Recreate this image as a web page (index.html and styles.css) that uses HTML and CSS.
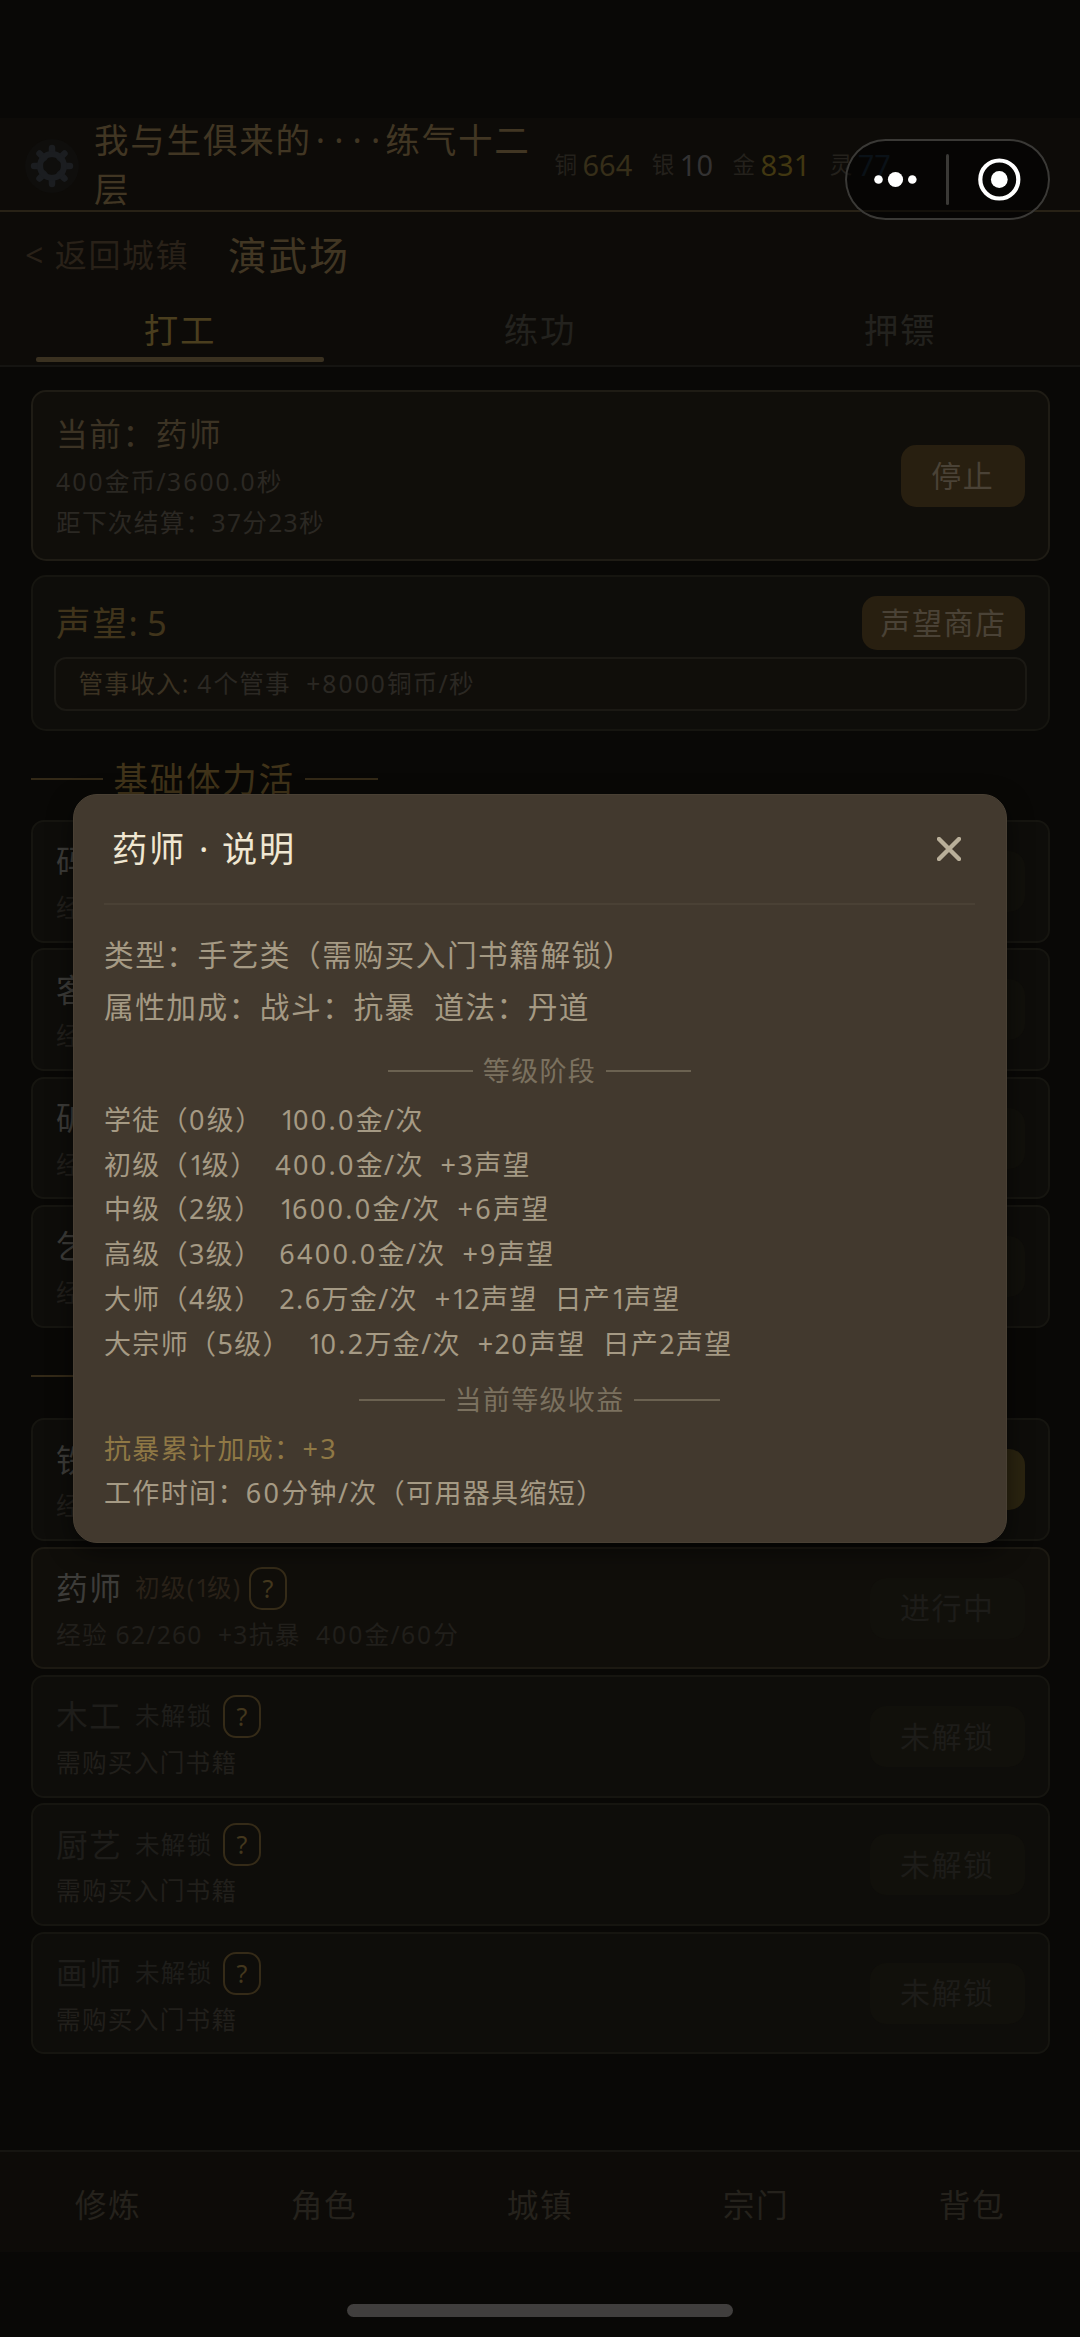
FILE: index.html
```html
<!DOCTYPE html>
<html lang="zh-CN">
<head>
<meta charset="utf-8">
<title>演武场</title>
<link rel="stylesheet" href="styles.css">
</head>
<body>
<div class="page">
  <header class="topbar">
    <svg class="gear" viewBox="-30 -30 60 60">
      <circle class="gear-glow" r="27"/>
      <g class="gear-teeth">
        <path d="M0-18V-12M0 12V18M-18 0H-12M12 0H18M-12.500-12.500L-8-8M8 8L12.500 12.500M12.500-12.500L8-8M-8 8L-12.500 12.500"/>
      </g>
      <circle class="gear-ring" r="12"/>
    </svg>
    <div class="player">我与生俱来的<span class="dots">····</span>练气十二层</div>
    <div class="coins">
      <span class="coin copper"><i>铜</i><b>664</b></span>
      <span class="coin silver"><i>银</i><b>10</b></span>
      <span class="coin gold"><i>金</i><b>831</b></span>
      <span class="coin spirit"><i>灵</i><b>77</b></span>
    </div>
  </header>

  <div class="subhead">
    <div class="crumbs"><span class="back">&lt; 返回城镇</span><span class="place">演武场</span></div>
    <nav class="tabs">
      <span class="tab active">打工</span><span class="tab">练功</span><span class="tab">押镖</span>
    </nav>
  </div>

  <main class="content">
    <section class="card current">
      <div class="current-info">
        <div class="current-name">当前：药师</div>
        <div class="current-line"><span class="n">400</span>金币/<span class="n">3600.0</span>秒</div>
        <div class="current-line">距下次结算：37分23秒</div>
      </div>
      <span class="btn stop">停止</span>
    </section>

    <section class="card fame">
      <div class="fame-row"><span class="fame-value">声望: 5</span><span class="btn shop">声望商店</span></div>
      <div class="income"><span class="income-label">管事收入: </span><span class="n">4</span>个管事  <span class="n">+8000</span>铜币/秒</div>
    </section>

    <h2 class="group">基础体力活</h2>
    <div class="jobs">
      <article class="card job"><div><div class="job-head"><span class="job-name">码头</span></div><div class="job-info">经验</div></div><span class="btn faint">打工</span></article>
      <article class="card job"><div><div class="job-head"><span class="job-name">客栈</span></div><div class="job-info">经验</div></div><span class="btn faint">打工</span></article>
      <article class="card job"><div><div class="job-head"><span class="job-name">矿工</span></div><div class="job-info">经验</div></div><span class="btn faint">打工</span></article>
      <article class="card job"><div><div class="job-head"><span class="job-name">乞讨</span></div><div class="job-info">经验</div></div><span class="btn faint">打工</span></article>
    </div>

    <h2 class="group second">手艺类</h2>
    <div class="jobs">
      <article class="card job"><div><div class="job-head"><span class="job-name">铁匠</span></div><div class="job-info">经验</div></div><span class="btn start">打工</span></article>
      <article class="card job running"><div><div class="job-head"><span class="job-name">药师</span><span class="job-level">初级(<span class="one">1</span>级)</span><span class="help">?</span></div><div class="job-info">经验 62/260  +3抗暴  <span class="n">400</span>金/<span class="n">60</span>分</div></div><span class="btn faint">进行中</span></article>
      <article class="card job locked"><div><div class="job-head"><span class="job-name">木工</span><span class="job-level">未解锁</span><span class="help">?</span></div><div class="job-info">需购买入门书籍</div></div><span class="btn faint">未解锁</span></article>
      <article class="card job locked"><div><div class="job-head"><span class="job-name">厨艺</span><span class="job-level">未解锁</span><span class="help">?</span></div><div class="job-info">需购买入门书籍</div></div><span class="btn faint">未解锁</span></article>
      <article class="card job locked"><div><div class="job-head"><span class="job-name">画师</span><span class="job-level">未解锁</span><span class="help">?</span></div><div class="job-info">需购买入门书籍</div></div><span class="btn faint">未解锁</span></article>
    </div>
  </main>

  <nav class="bottom-nav">
    <span>修炼</span><span>角色</span><span>城镇</span><span>宗门</span><span>背包</span>
  </nav>
  <div class="home-area"><div class="home-bar"></div></div>

  <div class="modal">
    <div class="modal-head">
      <div class="modal-title">药师<span class="sep">·</span>说明</div>
      <svg class="close" viewBox="0 0 24 24"><path d="M2 2L22 22M22 2L2 22"/></svg>
    </div>
    <div class="modal-main">
      <div>类型：手艺类（需购买入门书籍解锁）</div>
      <div>属性加成：战斗：抗暴  道法：丹道</div>
    </div>
    <div class="rule">等级阶段</div>
    <div class="levels">
      <div>学徒（<span class="n">0</span>级）  <span class="one">1</span><span class="n">00.0</span>金/次</div>
      <div>初级（<span class="one">1</span>级）  <span class="n">400.0</span>金/次  +3声望</div>
      <div>中级（2级）  <span class="one">1</span><span class="n">600.0</span>金/次  <span class="n">+6</span>声望</div>
      <div>高级（3级）  <span class="n">6400.0</span>金/次  <span class="n">+9</span>声望</div>
      <div>大师（4级）  2.6万金/次  +<span class="one">1</span>2声望  日产<span class="one">1</span>声望</div>
      <div>大宗师（5级）  <span class="one">1</span><span class="n">0.</span>2万金/次  +2<span class="n">0</span>声望  日产2声望</div>
    </div>
    <div class="rule late">当前等级收益</div>
    <div class="levels">
      <div class="bonus">抗暴累计加成：<span class="n">+3</span></div>
      <div>工作时间：<span class="n">60</span>分钟/次（可用器具缩短）</div>
    </div>
  </div>

  <div class="capsule">
    <svg viewBox="0 0 205 81">
      <circle cx="33.500" cy="40.500" r="4.300"/><circle cx="50.500" cy="40.500" r="7.600"/><circle cx="67.300" cy="40.500" r="4.300"/>
      <rect class="capsule-line" x="101" y="15" width="3" height="51" rx="1.500"/>
      <circle class="capsule-ring" cx="154.300" cy="40.500" r="19"/><circle cx="154.300" cy="40.500" r="8.400"/>
    </svg>
  </div>
</div>
</body>
</html>
```
FILE: styles.css
```css
* { box-sizing: border-box; letter-spacing: .05em; }
body {
  margin: 0;
  background: #090806;
  font-family: "Noto Sans", "Noto Sans CJK SC", sans-serif;
  line-height: 1.4;
}
i, b { font-style: normal; font-weight: 400; }
/* digit spacing: narrow "1", slightly open for the round figures */
.n { letter-spacing: .085em; }
.one { letter-spacing: -.1em; }
.page {
  position: relative;
  display: flex;
  flex-direction: column;
  width: 1080px;
  height: 2337px;
  padding-top: 118px;
  overflow: hidden;
}

/* header */
.topbar {
  display: flex;
  align-items: center;
  height: 94px;
  flex: none;
  padding-left: 22px;
  background: #0d0b08;
  border-bottom: 2px solid #282216;
}
.gear { width: 60px; height: 60px; margin-top: 3px; }
.gear-glow { fill: #0f0e0c; }
.gear-teeth { fill: none; stroke: #1b1d20; stroke-width: 6.5; stroke-linecap: round; }
.gear-ring { fill: none; stroke: #1b1d20; stroke-width: 6; }
.player {
  width: 450px;
  height: 98px;
  margin-left: 12px;
  font-size: 34.6px;
  line-height: 49px;
  color: #413623;
}
.dots { letter-spacing: 9.1px; margin: 0 -4px 0 4px; }
.coins { display: flex; gap: 19.5px; margin: 2px 0 0 10.5px; }
.coin { display: flex; align-items: center; gap: 5.5px; }
.coin i { font-size: 22.5px; letter-spacing: 0; color: #24211c; }
.coin b { font-size: 29px; letter-spacing: 0; line-height: 40px; }
.copper b { color: #362e19; }
.silver b { color: #333232; }
.gold b { color: #413711; }
.spirit b { color: #15222f; }

.subhead { flex: none; height: 155px; background: #0d0b08; border-bottom: 2px solid #151411; }
.crumbs { display: flex; align-items: center; height: 86px; padding-left: 25px; }
.back { width: 203px; font-size: 32px; color: #292118; }
.place { font-size: 38.7px; color: #413623; }
.tabs { display: flex; height: 67px; }
.tab {
  display: flex;
  flex-direction: column;
  align-items: center;
  width: 360px;
  font-size: 34.5px;
  line-height: 64px;
  color: #23221e;
}
.active { color: #4a3e1e; }
.active::after { content: ""; width: 288px; height: 5px; margin-top: -5px; border-radius: 2px; background: #3a3120; }

/* cards */
.content { flex: 1; padding: 23px 30.500px 0; }
.card { border: 2px solid #161510; border-radius: 15px; background: #0e0d0a; }
.btn {
  display: flex;
  align-items: center;
  justify-content: center;
  border-radius: 15px;
  font-size: 30px;
  background: #281f10;
  color: #4a4236;
}
.current {
  display: flex;
  justify-content: space-between;
  height: 171px;
  padding: 18px 22.500px 0 23.500px;
  background: #100e0a;
  border-color: #1f1c15;
}
.current-name { margin-bottom: 4px; font-size: 31.7px; line-height: 48px; color: #3c3324; }
.current-line { font-size: 24.7px; line-height: 40.5px; color: #2b2823; }
.stop { width: 124.500px; height: 62px; margin-top: 35px; }
.fame { height: 156px; margin-top: 14px; padding: 18.500px 21px 0; }
.fame-row { display: flex; justify-content: space-between; align-items: center; padding: 0 1.500px 0 2.500px; }
.fame-value { font-size: 34.5px; line-height: 52px; word-spacing: -3px; color: #40341b; }
.shop { width: 163px; height: 54px; }
.income {
  height: 54px;
  margin-top: 7.500px;
  padding-left: 23px;
  border: 2px solid #1b1914;
  border-radius: 12px;
  background: #100e0a;
  font-size: 24.6px;
  line-height: 50px;
  white-space: pre;
  color: #2b2823;
}
.income-label { color: #3b3222; }
.group {
  display: flex;
  align-items: center;
  gap: 10.500px;
  height: 50px;
  margin: 23px 0 16px;
  font-size: 34.5px;
  font-weight: 400;
  color: #403319;
}
.group::before, .group::after { content: ""; width: 72.500px; height: 2px; background: #332917; }
.second { margin: 23.500px 0 17px; }
.jobs { display: flex; flex-direction: column; gap: 5.8px; }
.job {
  display: flex;
  justify-content: space-between;
  height: 122.6px;
  padding: 18px 22.500px 0 23.500px;
  border-radius: 13px;
}
.job-head { display: flex; align-items: center; height: 43px; }
.job-name { width: 79px; font-size: 31.7px; color: #3d3c39; }
.job-level { font-size: 24.6px; color: #292118; }
.running .job-level { margin-right: -3px; }
.help {
  display: flex;
  justify-content: center;
  align-items: center;
  width: 38px;
  height: 43px;
  margin-left: 10.500px;
  border: 2px solid #352b18;
  border-radius: 13px;
  font-size: 25px;
  letter-spacing: 0;
  color: #43371d;
}
.job-info { font-size: 24.7px; line-height: 49px; white-space: pre; color: #211f1b; }
.running { background: #100e0a; border-color: #1c1912; }
.locked .job-name, .locked .job-level { color: #1e1d1a; }
.job .btn { width: 155.500px; height: 61px; margin-top: 11px; border-radius: 16px; }
.job .faint { background: #11100b; color: #1d1c19; }
.job .start { background: #2b2410; }

/* bottom navigation */
.bottom-nav {
  display: flex;
  flex: none;
  height: 102px;
  border-top: 2px solid #161511;
  background: #0d0b08;
  font-size: 31.7px;
  line-height: 106px;
  color: #25221c;
}
.bottom-nav span { width: 216px; text-align: center; }
.home-area { flex: none; height: 85px; padding-top: 52px; }
.home-bar { width: 386px; height: 13px; margin: 0 auto; border-radius: 6.500px; background: #403e3d; }

/* dialog */
.modal {
  position: absolute;
  left: 72.500px;
  top: 794px;
  width: 934px;
  height: 748.500px;
  padding: 0 30.500px;
  border: 1px solid #494034;
  border-radius: 24px;
  background: #42392e;
  box-shadow: 0 8px 24px rgba(0, 0, 0, .5);
  color: #a59a84;
}
.modal-head {
  display: flex;
  justify-content: space-between;
  align-items: center;
  height: 109.500px;
  padding: 0 14px 0 8px;
  border-bottom: 2px solid #4a4135;
}
.modal-title { font-size: 35.2px; color: #f0e7d2; }
.sep { margin: 0 12px 0 13px; }
.close { width: 24px; height: 24px; fill: none; stroke: #b9af99; stroke-width: 4.4; stroke-linecap: round; }
.modal-main { padding-top: 24.500px; font-size: 29.7px; line-height: 52px; }
.modal-main div, .levels div { white-space: pre; }
.rule {
  display: flex;
  justify-content: center;
  align-items: center;
  gap: 9.500px;
  height: 44px;
  margin-top: 16px;
  font-size: 27px;
  color: #7b715f;
}
.rule::before, .rule::after { content: ""; width: 85.500px; height: 2px; background: #6b6251; }
.levels { padding-top: 5px; font-size: 27px; line-height: 44.7px; }
.late { margin-top: 11.500px; }
.bonus { color: #8f7845; }

/* mini-program capsule */
.capsule {
  position: absolute;
  left: 845px;
  top: 139px;
  width: 205px;
  height: 81px;
  border-radius: 41px;
  background: rgba(0, 0, 0, .5);
  box-shadow: inset 0 0 0 2px #3a3936;
}
.capsule svg { display: block; width: 205px; height: 81px; fill: #fff; }
.capsule-line { fill: #3a3936; }
.capsule .capsule-ring { fill: none; stroke: #fff; stroke-width: 4.2; }
```
